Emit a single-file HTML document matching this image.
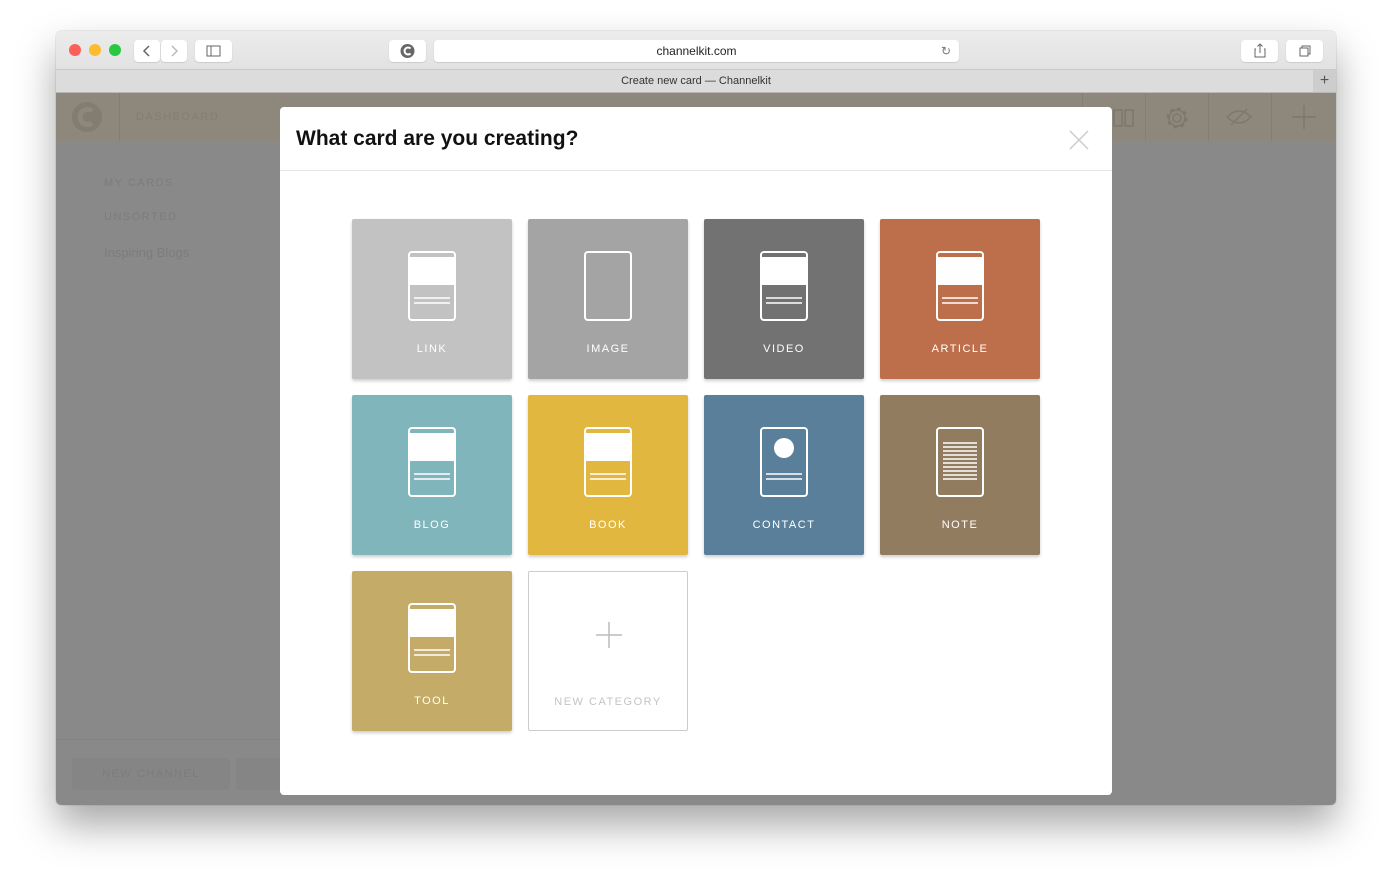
<!DOCTYPE html>
<html><head><meta charset="utf-8"><style>
*{margin:0;padding:0;box-sizing:border-box}
body{width:1392px;height:885px;background:#fff;font-family:"Liberation Sans",sans-serif;position:relative;overflow:hidden}
.win{position:absolute;left:56px;top:31px;width:1280px;height:774px;border-radius:5px;overflow:hidden;box-shadow:0 20px 40px rgba(0,0,0,.35),0 0 1px rgba(0,0,0,.4)}
.tb{position:absolute;left:0;top:0;width:1280px;height:39px;background:linear-gradient(#ececec,#e2e2e2);border-bottom:1px solid #c8c8c8}
.tab{position:absolute;left:0;top:39px;width:1280px;height:23px;background:#dcdcdc;border-bottom:1px solid #b8b8b8;font-size:11px;color:#333;text-align:center;line-height:23px}
.dot{position:absolute;top:13px;width:12px;height:12px;border-radius:50%}
.btn{position:absolute;top:9px;height:22px;background:#fff;border-radius:4px;box-shadow:0 0.5px 1px rgba(0,0,0,.2)}
.content{position:absolute;left:0;top:62px;width:1280px;height:712px;background:#898989}
.hdr{position:absolute;left:0;top:0;width:1280px;height:48px;background:#8e877b}
.side{position:absolute;color:#7c7c7c;font-size:11px;letter-spacing:1.5px}
.modal{position:absolute;left:280px;top:107px;width:832px;height:688px;background:#fff;border-radius:4px}
.modal h1{position:absolute;left:16px;top:20px;font-size:21px;font-weight:bold;color:#111}
.modal .line{position:absolute;left:0;top:63px;width:832px;height:1px;background:#e4e4e4}
.t{position:absolute;width:160px;height:160px;border-radius:2px;box-shadow:0 2px 3px rgba(0,0,0,.2)}
.t svg{position:absolute;left:56px;top:32px}
.t span{position:absolute;left:0;width:160px;top:124px;text-align:center;color:#fff;font-size:11px;letter-spacing:1.5px}
.vd{position:absolute;top:0;width:1px;height:48px;background:#857e72}
</style></head><body>
<div class="win">
<div class="tb">
<div class="dot" style="left:13px;background:#fc5f57"></div>
<div class="dot" style="left:33px;background:#fdbc2e"></div>
<div class="dot" style="left:53px;background:#28c840"></div>
<div class="btn" style="left:78px;width:26px"><svg width="26" height="22"><path d="M15 6l-5 5 5 5" stroke="#666" stroke-width="1.5" fill="none"/></svg></div>
<div class="btn" style="left:105px;width:26px"><svg width="26" height="22"><path d="M11 6l5 5-5 5" stroke="#bbb" stroke-width="1.5" fill="none"/></svg></div>
<div class="btn" style="left:139px;width:37px"><svg width="37" height="22"><rect x="12" y="6" width="13" height="10" stroke="#666" fill="none"/><path d="M16 6v10" stroke="#666"/></svg></div>
<div class="btn" style="left:333px;width:37px"><svg width="37" height="22"><circle cx="18.5" cy="11" r="7" fill="#666"/><path d="M21.5 8.5a3.5 3.5 0 1 0 0 5" stroke="#fff" stroke-width="2" fill="none"/></svg></div>
<div class="btn" style="left:378px;width:525px;font-size:12px;color:#222;text-align:center;line-height:22px">channelkit.com<span style="position:absolute;right:8px;color:#777">↻</span></div>
<div class="btn" style="left:1185px;width:37px"><svg width="37" height="22"><path d="M15 9h-1v8h10v-8h-1M19 4v9M16.5 6.5l2.5-2.5 2.5 2.5" stroke="#666" fill="none"/></svg></div>
<div class="btn" style="left:1230px;width:37px"><svg width="37" height="22"><rect x="14" y="8" width="8" height="8" stroke="#666" fill="none"/><path d="M16 8v-2h8v8h-2" stroke="#666" fill="none"/></svg></div>
</div>
<div class="tab">Create new card — Channelkit<div style="position:absolute;right:0;top:0;width:23px;height:22px;background:#cdcdcd;color:#555;font-size:16px;line-height:21px">+</div></div>
<div class="content">
<div class="hdr">
<svg style="position:absolute;left:15px;top:8px" width="32" height="32"><circle cx="16" cy="16" r="15" fill="#837c70"/><path d="M21 10a7.5 7.5 0 1 0 0 12" stroke="#8e877b" stroke-width="5" fill="none"/></svg>
<div class="vd" style="left:63px"></div>
<div class="side" style="left:80px;top:18px;color:#857e70">DASHBOARD</div>
<div class="vd" style="left:1026px"></div>
<div class="vd" style="left:1089px"></div>
<div class="vd" style="left:1152px"></div>
<div class="vd" style="left:1215px"></div>
<svg style="position:absolute;left:1056px;top:15px" width="24" height="20"><rect x="2" y="2" width="8" height="16" stroke="#7e776b" stroke-width="1.5" fill="none"/><rect x="13" y="2" width="8" height="16" stroke="#7e776b" stroke-width="1.5" fill="none"/></svg>
<svg style="position:absolute;left:1108px;top:12px" width="26" height="26"><circle cx="13" cy="13" r="4" stroke="#7e776b" stroke-width="1.5" fill="none"/><circle cx="13" cy="13" r="9" stroke="#7e776b" stroke-width="3" fill="none" stroke-dasharray="3.5 3.5"/><circle cx="13" cy="13" r="8" stroke="#7e776b" stroke-width="1.5" fill="none"/></svg>
<svg style="position:absolute;left:1168px;top:13px" width="30" height="22"><path d="M3 11q12-12 24 0q-12 12-24 0M7 19L23 3" stroke="#7e776b" stroke-width="1.5" fill="none"/></svg>
<svg style="position:absolute;left:1235px;top:11px" width="26" height="26"><path d="M13 1v24M1 13h24" stroke="#7e776b" stroke-width="1.5"/></svg>
</div>
<div class="side" style="left:48px;top:84px">MY CARDS</div>
<div class="side" style="left:48px;top:118px">UNSORTED</div>
<div class="side" style="left:48px;top:152px;font-size:13px;letter-spacing:0">Inspiring Blogs</div>
<div style="position:absolute;left:0;top:646px;width:352px;height:1px;background:#838383"></div>
<div style="position:absolute;left:16px;top:665px;width:158px;height:32px;background:#858585;border-radius:3px;color:#7c7c7c;font-size:11px;letter-spacing:1.5px;text-align:center;line-height:32px">NEW CHANNEL</div>
<div style="position:absolute;left:180px;top:665px;width:60px;height:32px;background:#858585;border-radius:3px"></div>
</div>
</div>
<div class="modal">
<h1>What card are you creating?</h1>
<svg style="position:absolute;left:789px;top:23px" width="20" height="20"><path d="M1 1l18 18M19 1L1 19" stroke="#ccc" stroke-width="1.5"/></svg>
<div class="line"></div>
</div>
<div class="t" style="left:352px;top:219px;background:#c2c2c2"><svg width="48" height="70"><rect x="1" y="1" width="46" height="68" rx="3" stroke="#fff" stroke-width="2" fill="none"/><rect x="2" y="6" width="44" height="28" fill="#fff"/><path d="M6 47h36M6 52h36" stroke="#fff" stroke-width="1.5"/></svg><span>LINK</span></div>
<div class="t" style="left:528px;top:219px;background:#a4a4a4"><svg width="48" height="70"><rect x="1" y="1" width="46" height="68" rx="3" stroke="#fff" stroke-width="2" fill="none"/></svg><span>IMAGE</span></div>
<div class="t" style="left:704px;top:219px;background:#727272"><svg width="48" height="70"><rect x="1" y="1" width="46" height="68" rx="3" stroke="#fff" stroke-width="2" fill="none"/><rect x="2" y="6" width="44" height="28" fill="#fff"/><path d="M6 47h36M6 52h36" stroke="#fff" stroke-width="1.5"/></svg><span>VIDEO</span></div>
<div class="t" style="left:880px;top:219px;background:#bd6f4b"><svg width="48" height="70"><rect x="1" y="1" width="46" height="68" rx="3" stroke="#fff" stroke-width="2" fill="none"/><rect x="2" y="6" width="44" height="28" fill="#fff"/><path d="M6 47h36M6 52h36" stroke="#fff" stroke-width="1.5"/></svg><span>ARTICLE</span></div>
<div class="t" style="left:352px;top:395px;background:#80b5bb"><svg width="48" height="70"><rect x="1" y="1" width="46" height="68" rx="3" stroke="#fff" stroke-width="2" fill="none"/><rect x="2" y="6" width="44" height="28" fill="#fff"/><path d="M6 47h36M6 52h36" stroke="#fff" stroke-width="1.5"/></svg><span>BLOG</span></div>
<div class="t" style="left:528px;top:395px;background:#e2b740"><svg width="48" height="70"><rect x="1" y="1" width="46" height="68" rx="3" stroke="#fff" stroke-width="2" fill="none"/><rect x="2" y="6" width="44" height="28" fill="#fff"/><path d="M6 47h36M6 52h36" stroke="#fff" stroke-width="1.5"/></svg><span>BOOK</span></div>
<div class="t" style="left:704px;top:395px;background:#5a7f9a"><svg width="48" height="70"><rect x="1" y="1" width="46" height="68" rx="3" stroke="#fff" stroke-width="2" fill="none"/><circle cx="24" cy="21" r="10" fill="#fff"/><path d="M6 47h36M6 52h36" stroke="#fff" stroke-width="1.5"/></svg><span>CONTACT</span></div>
<div class="t" style="left:880px;top:395px;background:#927c60"><svg width="48" height="70"><rect x="1" y="1" width="46" height="68" rx="3" stroke="#fff" stroke-width="2" fill="none"/><path d="M7 16h34M7 20h34M7 24h34M7 28h34M7 32h34M7 36h34M7 40h34M7 44h34M7 48h34M7 52h34" stroke="#fff" stroke-width="1.5"/></svg><span>NOTE</span></div>
<div class="t" style="left:352px;top:571px;background:#c4ab68"><svg width="48" height="70"><rect x="1" y="1" width="46" height="68" rx="3" stroke="#fff" stroke-width="2" fill="none"/><rect x="2" y="6" width="44" height="28" fill="#fff"/><path d="M6 47h36M6 52h36" stroke="#fff" stroke-width="1.5"/></svg><span>TOOL</span></div>
<div class="t" style="left:528px;top:571px;background:#fff;border:1px solid #ccc;box-shadow:none"><svg style="left:67px;top:50px" width="26" height="26"><path d="M13 0v26M0 13h26" stroke="#bbb" stroke-width="1.5"/></svg><span style="color:#c4c4c4;top:124px;left:-1px">NEW CATEGORY</span></div>
</body></html>
